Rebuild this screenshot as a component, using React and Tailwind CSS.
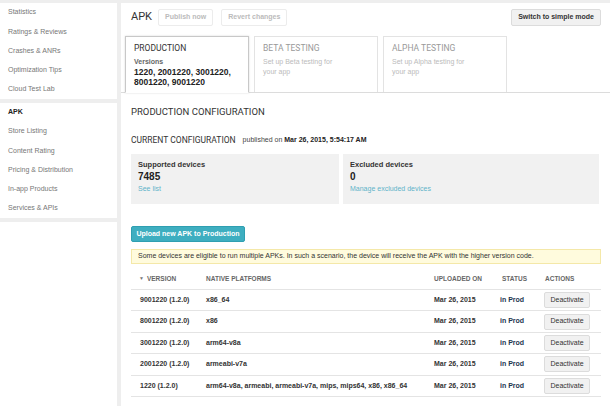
import React from 'react';

const menuTop = ['Statistics', 'Ratings & Reviews', 'Crashes & ANRs', 'Optimization Tips', 'Cloud Test Lab'];
const menuApp = ['APK', 'Store Listing', 'Content Rating', 'Pricing & Distribution', 'In-app Products', 'Services & APIs'];

const apks = [
  { version: '9001220 (1.2.0)', platforms: 'x86_64' },
  { version: '8001220 (1.2.0)', platforms: 'x86' },
  { version: '3001220 (1.2.0)', platforms: 'arm64-v8a' },
  { version: '2001220 (1.2.0)', platforms: 'armeabi-v7a' },
  { version: '1220 (1.2.0)', platforms: 'arm64-v8a, armeabi, armeabi-v7a, mips, mips64, x86, x86_64' },
];

function SideItem({ label, active }) {
  return (
    <div
      className={
        'h-[19.2px] flex items-center pl-[8px] text-[7px] ' +
        (active ? 'font-bold text-[#222]' : 'text-[#777]')
      }
    >
      {label}
    </div>
  );
}

function Tab({ title, children, active }) {
  return (
    <div
      className={
        'w-[124px] bg-white border px-[8px] pt-[6px] ' +
        (active
          ? 'h-[57px] -mb-px border-[#c8c8c8] border-b-white shadow-[0_0_2px_rgba(0,0,0,0.15)] relative'
          : 'h-[56px] border-[#e3e3e3] border-b-0')
      }
    >
      <div
        className={
          "font-['Roboto',sans-serif] text-[8.5px] leading-[11px] " +
          (active ? 'text-[#333]' : 'text-[#999]')
        }
      >
        {title}
      </div>
      {children}
    </div>
  );
}

export default function App() {
  return (
    <div className="w-[610px] h-[406px] overflow-hidden bg-[#eeeeee] flex pt-[3px] font-['Liberation_Sans',Arial,sans-serif]">
      <aside className="w-[117px] shrink-0 flex flex-col gap-[4px]">
        <div className="bg-white">
          {menuTop.map((m) => (
            <SideItem key={m} label={m} />
          ))}
        </div>
        <div className="bg-white">
          {menuApp.map((m, i) => (
            <SideItem key={m} label={m} active={i === 0} />
          ))}
        </div>
        <div className="bg-white flex-1" />
      </aside>

      <main className="ml-[4px] flex-1 bg-white flex flex-col">
        <div className="border-b border-[#dcdcdc] flex flex-col">
          <div className="mt-[5px] h-[18px] flex items-center pl-[10px] pr-[9px]">
            <span className="font-['Roboto',sans-serif] text-[11px] text-[#333] mr-[6px]">APK</span>
            <span className="h-[17px] px-[6px] flex items-center border border-[#ececec] rounded-[2px] text-[7px] font-bold text-[#bbb] mr-[8px]">
              Publish now
            </span>
            <span className="h-[17px] px-[6px] flex items-center border border-[#ececec] rounded-[2px] text-[7px] font-bold text-[#bbb]">
              Revert changes
            </span>
            <span className="ml-auto h-[17px] px-[6px] flex items-center bg-[#f1f1f1] border border-[#dcdcdc] rounded-[2px] text-[7px] font-bold text-[#333]">
              Switch to simple mode
            </span>
          </div>
          <div className="mt-[10px] flex items-end gap-[5px] pl-[4px]">
            <Tab title="PRODUCTION" active>
              <div className="mt-[3px] text-[7px] leading-[9px] font-bold text-[#666]">Versions</div>
              <div className="mt-[1px] text-[8.5px] leading-[10px] font-bold text-[#222]">
                1220, 2001220, 3001220,
                <br />
                8001220, 9001220
              </div>
            </Tab>
            <Tab title="BETA TESTING">
              <div className="mt-[3px] text-[7px] leading-[9.5px] text-[#bbb]">
                Set up Beta testing for
                <br />
                your app
              </div>
            </Tab>
            <Tab title="ALPHA TESTING">
              <div className="mt-[3px] text-[7px] leading-[9.5px] text-[#bbb]">
                Set up Alpha testing for
                <br />
                your app
              </div>
            </Tab>
          </div>
        </div>

        <div className="pl-[10px] pr-[9px] flex flex-col">
          <div className="mt-[13px] font-['Roboto',sans-serif] text-[9.5px] leading-[12px] text-[#333]">
            PRODUCTION CONFIGURATION
          </div>
          <div className="mt-[16px] flex items-center leading-[12px]">
            <span className="font-['Roboto',sans-serif] text-[8.5px] text-[#333]">CURRENT CONFIGURATION</span>
            <span className="ml-[7px] text-[7px] text-[#444]">
              published on <b className="text-[#222]">Mar 26, 2015, 5:54:17 AM</b>
            </span>
          </div>

          <div className="mt-[8px] flex gap-[4px] pr-[2px]">
            <div className="w-[208px] h-[50px] bg-[#f1f1f1] pl-[7px] pt-[6px]">
              <div className="text-[7.5px] leading-[10px] font-bold text-[#333]">Supported devices</div>
              <div className="text-[10px] leading-[13px] font-bold text-[#222]">7485</div>
              <div className="text-[7px] leading-[11px] text-[#5fb3c9]">See list</div>
            </div>
            <div className="flex-1 h-[50px] bg-[#f1f1f1] pl-[7px] pt-[6px]">
              <div className="text-[7.5px] leading-[10px] font-bold text-[#333]">Excluded devices</div>
              <div className="text-[10px] leading-[13px] font-bold text-[#222]">0</div>
              <div className="text-[7px] leading-[11px] text-[#5fb3c9]">Manage excluded devices</div>
            </div>
          </div>

          <div className="mt-[22px] self-start h-[16px] w-[114px] flex items-center justify-center bg-[#3eaec0] border border-[#2f9fb1] rounded-[2px] text-[7px] font-bold text-white">
            Upload new APK to Production
          </div>

          <div className="mt-[7px] h-[15px] flex items-center pl-[6px] bg-[#fffbdd] border border-[#f4e8a8] text-[7px] text-[#333]">
            Some devices are eligible to run multiple APKs. In such a scenario, the device will receive the APK with the higher version code.
          </div>

          <div className="grid grid-cols-[75px_228px_66px_44px_1fr] h-[26px] items-end pb-[6px] border-b border-[#e4e4e4] text-[6.5px] leading-[9px] font-bold text-[#666]">
            <div className="pl-[8px] flex items-center gap-[3px]">
              <span className="text-[5px] text-[#777]">▼</span>VERSION
            </div>
            <div>NATIVE PLATFORMS</div>
            <div>UPLOADED ON</div>
            <div className="pl-[2px]">STATUS</div>
            <div className="pl-[1px]">ACTIONS</div>
          </div>

          {apks.map((a) => (
            <div
              key={a.version}
              className="grid grid-cols-[75px_228px_66px_44px_1fr] h-[21.4px] items-center border-b border-[#e4e4e4] text-[7px] font-bold text-[#333]"
            >
              <div className="pl-[9px]">{a.version}</div>
              <div>{a.platforms}</div>
              <div>Mar 26, 2015</div>
              <div className="text-[#22364f]">in Prod</div>
              <div>
                <span className="inline-flex h-[16px] w-[46px] items-center justify-center bg-[#f1f1f1] border border-[#dcdcdc] rounded-[2px] text-[7px] font-normal text-[#333]">
                  Deactivate
                </span>
              </div>
            </div>
          ))}
        </div>
      </main>
    </div>
  );
}
